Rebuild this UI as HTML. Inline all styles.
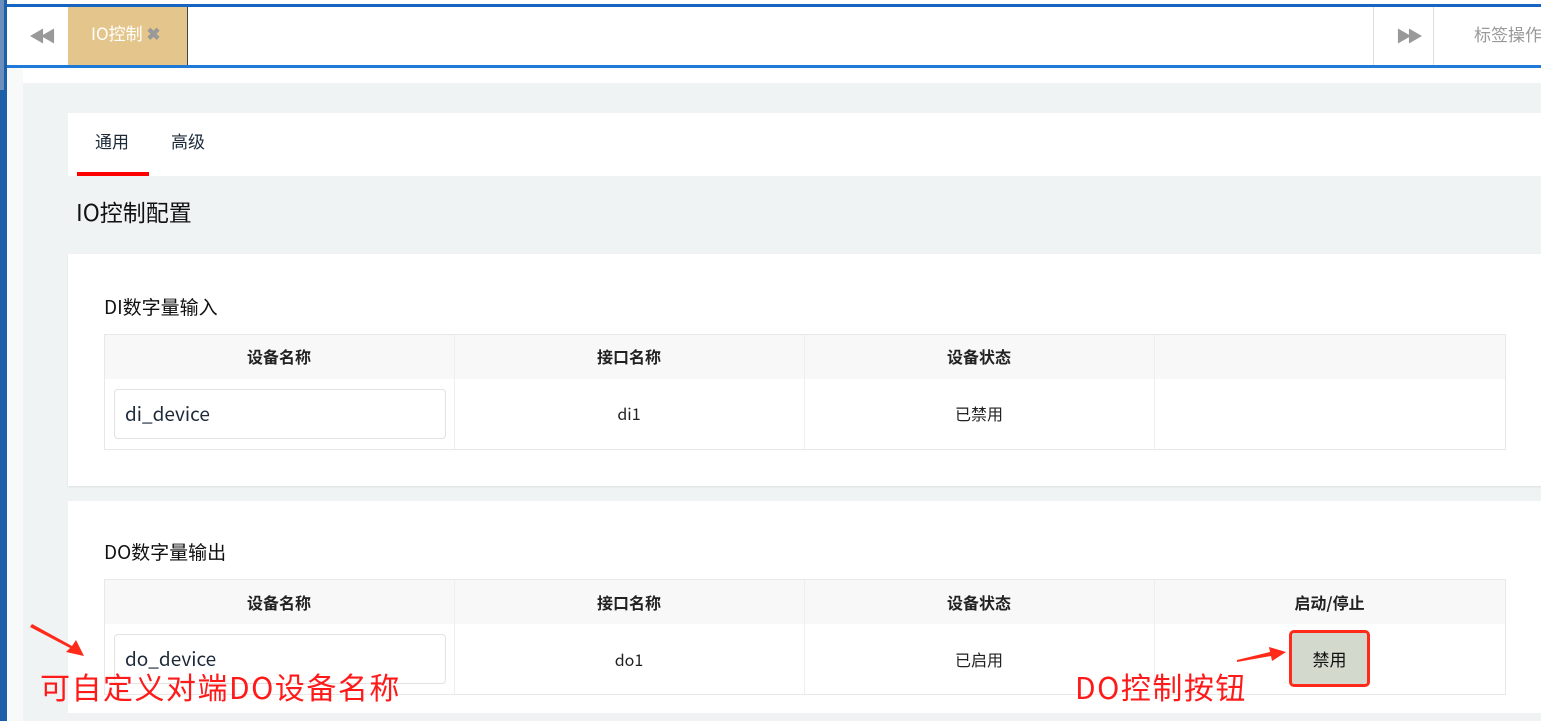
<!DOCTYPE html>
<html><head><meta charset="utf-8"><style>
*{box-sizing:border-box;margin:0;padding:0}
body{width:1541px;height:721px;overflow:hidden;background:#fff;position:relative;font-family:"Noto Sans CJK SC","Liberation Sans",sans-serif;color:#222}
.abs{position:absolute;line-height:1.2}
.th{position:absolute;font-weight:bold;font-size:16px;text-align:center;color:#222;line-height:22px}
.td{position:absolute;font-size:16px;text-align:center;color:#222;line-height:22px}
.vl{position:absolute;width:1px;background:#eee}
.inp{position:absolute;border:1px solid #e2e2e2;border-radius:4px;background:#fff;font-size:19px;padding-left:10px;line-height:48px;color:#1c2a3a}
</style></head><body>
<div class="abs" style="left:0;top:0;width:7px;height:721px;background:#1a5fa8"></div>
<div class="abs" style="left:0;top:0;width:4px;height:90px;background:#6b8fba"></div>
<div class="abs" style="left:7px;top:67px;width:16px;height:654px;background:#f8f9f9"></div>
<div class="abs" style="left:7px;top:4px;width:1534px;height:3px;background:#1565c0"></div>
<div class="abs" style="left:7px;top:65px;width:1534px;height:3px;background:#1e7ad6"></div>
<div class="abs" style="left:7px;top:7px;width:1534px;height:58px;background:#fff"></div>
<div class="abs" style="left:29px;top:26px;font-size:16px;color:#999;letter-spacing:-5px">◀◀</div>
<div class="abs" style="left:68px;top:7px;width:120px;height:58px;background:#e4c68d;border-right:1px solid #444"></div>
<div class="abs" style="left:91px;top:23px;font-size:17px;color:#fff">IO控制 <span style="color:#999;font-weight:bold">✖</span></div>
<div class="abs" style="left:1373px;top:7px;width:1px;height:58px;background:#ddd"></div>
<div class="abs" style="left:1433px;top:7px;width:1px;height:58px;background:#ddd"></div>
<div class="abs" style="left:1396px;top:26px;font-size:16px;color:#999;letter-spacing:-5px">▶▶</div>
<div class="abs" style="left:1474px;top:24px;font-size:17px;color:#999;white-space:nowrap">标签操作</div>
<div class="abs" style="left:23px;top:83px;width:1518px;height:638px;background:#f0f3f4"></div>
<div class="abs" style="left:68px;top:113px;width:1473px;height:63px;background:#fff"></div>
<div class="abs" style="left:95px;top:131px;font-size:17px;color:#1c2a3a">通用</div>
<div class="abs" style="left:171px;top:131px;font-size:17px;color:#1c2a3a">高级</div>
<div class="abs" style="left:77px;top:172px;width:72px;height:4px;background:#f00"></div>
<div class="abs" style="left:76px;top:198px;font-size:23px;color:#111">IO控制配置</div>
<div class="abs" style="left:68px;top:254px;width:1473px;height:232px;background:#fff;box-shadow:0 1px 2px rgba(0,0,0,.08)"></div>
<div class="abs" style="left:104px;top:296px;font-size:19px;color:#111">DI数字量输入</div>
<div class="abs" style="left:104px;top:334px;width:1402px;height:116px;border:1px solid #e8e8e8;background:#fff"></div>
<div class="abs" style="left:105px;top:335px;width:1400px;height:44px;background:#f8f8f8"></div>
<div class="vl" style="left:454px;top:335px;height:114px"></div>
<div class="vl" style="left:804px;top:335px;height:114px"></div>
<div class="vl" style="left:1154px;top:335px;height:114px"></div>
<div class="th" style="left:104px;top:345px;width:350px">设备名称</div>
<div class="th" style="left:454px;top:345px;width:350px">接口名称</div>
<div class="th" style="left:804px;top:345px;width:350px">设备状态</div>
<div class="inp" style="left:114px;top:389px;width:332px;height:50px">di_device</div>
<div class="td" style="left:454px;top:402px;width:350px">di1</div>
<div class="td" style="left:804px;top:402px;width:350px">已禁用</div>
<div class="abs" style="left:68px;top:501px;width:1473px;height:212px;background:#fff"></div>
<div class="abs" style="left:104px;top:541px;font-size:19px;color:#111">DO数字量输出</div>
<div class="abs" style="left:104px;top:579px;width:1402px;height:116px;border:1px solid #e8e8e8;background:#fff"></div>
<div class="abs" style="left:105px;top:580px;width:1400px;height:44px;background:#f8f8f8"></div>
<div class="vl" style="left:454px;top:580px;height:114px"></div>
<div class="vl" style="left:804px;top:580px;height:114px"></div>
<div class="vl" style="left:1154px;top:580px;height:114px"></div>
<div class="th" style="left:104px;top:591px;width:350px">设备名称</div>
<div class="th" style="left:454px;top:591px;width:350px">接口名称</div>
<div class="th" style="left:804px;top:591px;width:350px">设备状态</div>
<div class="th" style="left:1154px;top:591px;width:351px">启动/停止</div>
<div class="inp" style="left:114px;top:634px;width:332px;height:50px">do_device</div>
<div class="td" style="left:454px;top:648px;width:350px">do1</div>
<div class="td" style="left:804px;top:648px;width:350px">已启用</div>
<div class="abs" style="left:1289px;top:630px;width:81px;height:57px;border:3px solid #ff2a1a;border-radius:5px;background:#d3d9cd;font-size:17px;text-align:center;line-height:51px;color:#111">禁用</div>
<svg class="abs" style="left:0;top:0" width="1541" height="721">
<polygon points="32,624 72,646 76,640 84,656 66,652 70,648 30,627" fill="#ff2a1a"/>
<polygon points="1237,660 1270,652 1269,647 1286,652 1272,661 1271,656 1237,662" fill="#ff2a1a"/>
</svg>
<div class="abs" style="left:40px;top:668px;font-size:30px;color:#ff1a1a;white-space:nowrap;letter-spacing:1.5px">可自定义对端DO设备名称</div>
<div class="abs" style="left:1075px;top:668px;font-size:30px;color:#ff1a1a;white-space:nowrap;letter-spacing:1.5px">DO控制按钮</div>
</body></html>
